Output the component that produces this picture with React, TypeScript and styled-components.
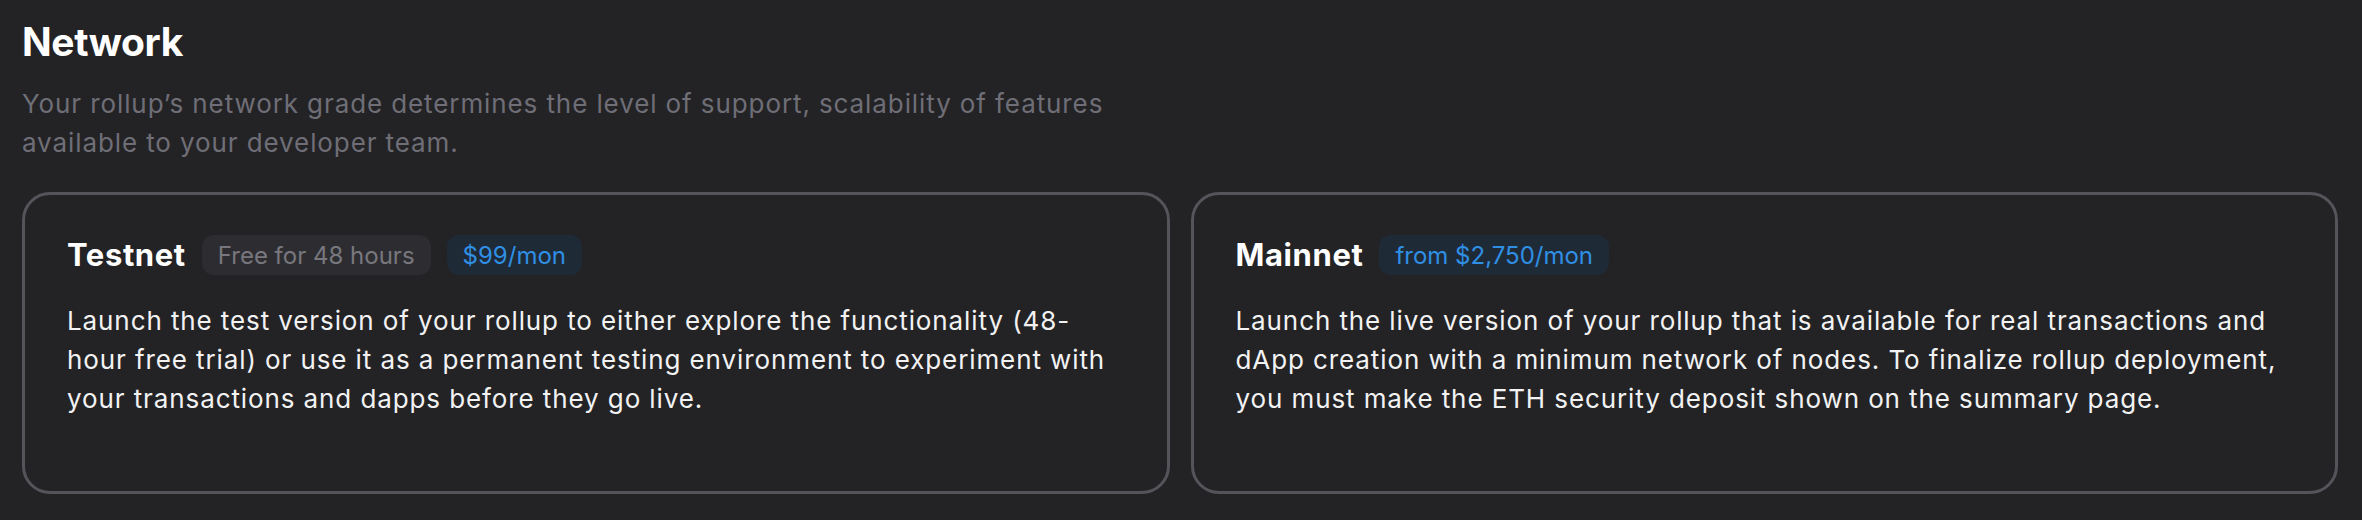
import React from "react";
import styled, { createGlobalStyle } from "styled-components";

const GlobalStyle = createGlobalStyle`
  html, body {
    margin: 0;
    padding: 0;
    background: #232326;
  }
  body {
    font-family: Inter, "Noto Sans", sans-serif;
    -webkit-font-smoothing: antialiased;
  }
  * { box-sizing: border-box; }
`;

const Page = styled.div`
  background: #232326;
  min-height: 520px;
  padding: 18px 24px 0 22px;
`;

const Heading = styled.h1`
  margin: 0;
  font-size: 39px;
  line-height: 48px;
  font-weight: 700;
  color: #ffffff;
  letter-spacing: -0.4px;
`;

const Subtitle = styled.p`
  margin: 18px 0 0;
  max-width: 1150px;
  font-size: 26px;
  line-height: 39px;
  letter-spacing: 0.9px;
  color: #6f6e76;
`;

const Cards = styled.div`
  display: flex;
  gap: 21px;
  margin-top: 30px;
`;

const Card = styled.div`
  flex: 1 1 0;
  min-width: 0;
  border: 3px solid #55545b;
  border-radius: 28px;
  padding: 40px 42px 73px 42px;
`;

const TitleRow = styled.div`
  display: flex;
  align-items: center;
  gap: 16px;
`;

const CardTitle = styled.h2`
  margin: 0;
  font-size: 31px;
  line-height: 40px;
  font-weight: 700;
  letter-spacing: 0.6px;
  color: #ffffff;
`;

const Badge = styled.span<{ $tone: "muted" | "blue" }>`
  display: inline-flex;
  align-items: center;
  height: 40px;
  padding: 0 16px;
  border-radius: 12px;
  font-size: 24px;
  font-weight: 400;
  background: ${(p) => (p.$tone === "blue" ? "#1f2a37" : "#2d2d31")};
  color: ${(p) => (p.$tone === "blue" ? "#2f8fe4" : "#78777e")};
`;

const Body = styled.p`
  margin: 26px 0 0;
  font-size: 26px;
  line-height: 39px;
  letter-spacing: 0.9px;
  color: #f2f2f3;
`;

type Plan = {
  title: string;
  badges: { text: string; tone: "muted" | "blue" }[];
  body: string;
};

const plans: Plan[] = [
  {
    title: "Testnet",
    badges: [
      { text: "Free for 48 hours", tone: "muted" },
      { text: "$99/mon", tone: "blue" },
    ],
    body:
      "Launch the test version of your rollup to either explore the functionality (48-hour free trial) or use it as a permanent testing environment to experiment with your transactions and dapps before they go live.",
  },
  {
    title: "Mainnet",
    badges: [{ text: "from $2,750/mon", tone: "blue" }],
    body:
      "Launch the live version of your rollup that is available for real transactions and dApp creation with a minimum network of nodes. To finalize rollup deployment, you must make the ETH security deposit shown on the summary page.",
  },
];

export default function App() {
  return (
    <>
      <GlobalStyle />
      <Page>
        <Heading>Network</Heading>
        <Subtitle>
          Your rollup’s network grade determines the level of support, scalability of features
          available to your developer team.
        </Subtitle>
        <Cards>
          {plans.map((p) => (
            <Card key={p.title}>
              <TitleRow>
                <CardTitle>{p.title}</CardTitle>
                {p.badges.map((b) => (
                  <Badge key={b.text} $tone={b.tone}>
                    {b.text}
                  </Badge>
                ))}
              </TitleRow>
              <Body>{p.body}</Body>
            </Card>
          ))}
        </Cards>
      </Page>
    </>
  );
}
